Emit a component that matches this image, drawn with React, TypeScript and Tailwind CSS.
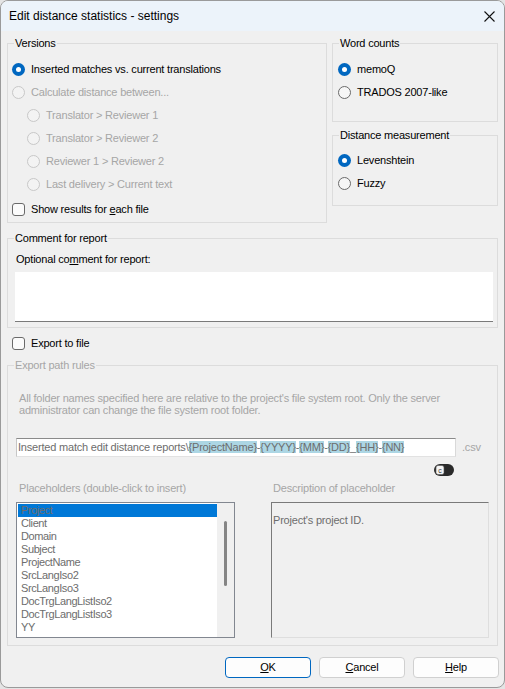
import React from "react";

const font = "font-['Liberation_Sans',Arial,sans-serif]";
const txt = "text-[11px] leading-[13px] tracking-[-0.2px]";

function Radio({ label, checked, disabled }: { label: string; checked?: boolean; disabled?: boolean }) {
  return (
    <div className="flex h-[23px] items-center gap-[6px]">
      {checked ? (
        <span className="flex h-[13px] w-[13px] items-center justify-center rounded-full bg-[#0067c0]">
          <span className="h-[5px] w-[5px] rounded-full bg-white" />
        </span>
      ) : (
        <span
          className={
            disabled
              ? "h-[13px] w-[13px] rounded-full border border-[#c8c8c8] bg-[#f3f3f3]"
              : "h-[13px] w-[13px] rounded-full border border-[#6a6a6a] bg-[#f6f6f6]"
          }
        />
      )}
      <span className={`${txt} ${disabled ? "text-[#a6a6a6]" : "text-black"}`}>{label}</span>
    </div>
  );
}

function Check({ children }: { children: React.ReactNode }) {
  return (
    <div className="flex h-[14px] items-center gap-[6px]">
      <span className="h-[13px] w-[13px] rounded-[3px] border border-[#6a6a6a] bg-[#fbfbfb]" />
      <span className={`${txt} text-black`}>{children}</span>
    </div>
  );
}

function Group({
  label,
  disabled,
  className,
  children,
}: {
  label: string;
  disabled?: boolean;
  className: string;
  children?: React.ReactNode;
}) {
  return (
    <div className={`relative border border-[#dcdcdc] ${className}`}>
      <span
        className={`absolute -top-[7px] left-[6px] bg-[#f0f0f0] px-[1px] ${txt} ${
          disabled ? "text-[#a6a6a6]" : "text-black"
        }`}
      >
        {label}
      </span>
      {children}
    </div>
  );
}

const placeholders = [
  "Project",
  "Client",
  "Domain",
  "Subject",
  "ProjectName",
  "SrcLangIso2",
  "SrcLangIso3",
  "DocTrgLangListIso2",
  "DocTrgLangListIso3",
  "YY",
];

function Hl({ children }: { children: React.ReactNode }) {
  return <span className="bg-[#acd6e4]">{children}</span>;
}

export default function App() {
  return (
    <div className={`h-[689px] w-[505px] bg-[#e4e4e4] ${font}`}>
      <div className="flex h-[688px] w-[505px] flex-col overflow-hidden rounded-[8px] border border-[#9a9a9a] bg-[#f0f0f0]">
        {/* title bar */}
        <div className="flex h-[30px] shrink-0 items-center justify-between bg-[#ecf3fa] pl-[8px] pr-[9px]">
          <span className="text-[12px] leading-[14px] text-black">Edit distance statistics - settings</span>
          <svg width="11" height="11" viewBox="0 0 11 11" className="mt-[1px]">
            <path d="M0.5 0.5 L10.5 10.5 M10.5 0.5 L0.5 10.5" stroke="#111" strokeWidth="1.1" />
          </svg>
        </div>

        <div className="flex flex-col pl-[6px] pt-[12px]">
          {/* top row */}
          <div className="flex gap-[5px]">
            <Group label="Versions" className="h-[180px] w-[320px]">
              <div className="pl-[4px] pt-[14px]">
                <Radio label="Inserted matches vs. current translations" checked />
                <Radio label="Calculate distance between..." disabled />
                <div className="pl-[15px]">
                  <Radio label="Translator > Reviewer 1" disabled />
                  <Radio label="Translator > Reviewer 2" disabled />
                  <Radio label="Reviewer 1 > Reviewer 2" disabled />
                  <Radio label="Last delivery > Current text" disabled />
                </div>
                <div className="mt-[6px]">
                  <Check>
                    Show results for <u className="underline-offset-1">e</u>ach file
                  </Check>
                </div>
              </div>
            </Group>
            <div className="flex w-[166px] flex-col gap-[13px]">
              <Group label="Word counts" className="h-[79px] w-[166px]">
                <div className="pl-[5px] pt-[14px]">
                  <Radio label="memoQ" checked />
                  <Radio label="TRADOS 2007-like" />
                </div>
              </Group>
              <Group label="Distance measurement" className="h-[71px] w-[166px]">
                <div className="pl-[5px] pt-[13px]">
                  <Radio label="Levenshtein" checked />
                  <Radio label="Fuzzy" />
                </div>
              </Group>
            </div>
          </div>

          {/* comment */}
          <Group label="Comment for report" className="mt-[15px] h-[90px] w-[491px]">
            <div className="pl-[8px] pt-[14px]">
              <div className={`${txt} h-[14px] text-black`}>
                Optional co<u className="underline-offset-1">m</u>ment for report:
              </div>
              <div className="mt-[5px] h-[50px] w-[478px] -translate-x-[1px] border-b border-[#7a7a7a] bg-white" />
            </div>
          </Group>

          <div className="mt-[8px] pl-[5px]">
            <Check>Export to file</Check>
          </div>

          {/* export path rules */}
          <Group label="Export path rules" disabled className="mt-[15px] h-[281px] w-[491px]">
            <div className={`pl-[11px] pt-[26px] text-[11px] leading-[12px] tracking-[-0.2px] text-[#a6a6a6]`}>
              All folder names specified here are relative to the project's file system root. Only the server
              <br />
              administrator can change the file system root folder.
            </div>
            <div className="mt-[22px] flex items-center pl-[8px]">
              <div className="flex h-[19px] w-[440px] items-center border border-t-[#8a8a8a] border-r-[#d9d9d9] border-b-[#e2e2e2] border-l-[#c6c6c6] bg-white pl-[1px]">
                <span className="whitespace-nowrap text-[11px] leading-[13px] tracking-[-0.2px] text-[#6d6d6d]">
                  Inserted match edit distance reports\<Hl>{"{ProjectName}"}</Hl>-<Hl>{"{YYYY}"}</Hl>-<Hl>{"{MM}"}</Hl>-
                  <Hl>{"{DD}"}</Hl>_<Hl>{"{HH}"}</Hl>-<Hl>{"{NN}"}</Hl>
                </span>
              </div>
              <span className={`${txt} ml-[6px] text-[#a6a6a6]`}>.csv</span>
            </div>
            <div className="mt-[7px] h-[12px] pl-[426px]">
              <svg width="20" height="12" viewBox="0 0 20 12">
                <rect x="0" y="0" width="20" height="12" rx="6" fill="#2a2a2a" />
                <rect x="2" y="1.5" width="8" height="9" rx="2" fill="#f4f4f4" stroke="#555" strokeWidth="0.6" />
                <text x="6" y="9" textAnchor="middle" fontSize="7" fontFamily="Liberation Sans, Arial, sans-serif" fill="#333">
                  c
                </text>
              </svg>
            </div>
            <div className={`${txt} mt-[5px] flex h-[14px] items-center text-[#a6a6a6]`}>
              <span className="w-[265px] pl-[11px]">Placeholders (double-click to insert)</span>
              <span>Description of placeholder</span>
            </div>
            <div className="mt-[7px] flex pl-[8px]">
              <div className="flex h-[136px] w-[219px] border border-[#828790] bg-white">
                <div className="flex-1 pl-[1px] pt-[1px]">
                  {placeholders.map((p, i) => (
                    <div
                      key={p}
                      className={`h-[13px] pl-[3px] text-[11px] leading-[13px] tracking-[-0.4px] text-[#6d6d6d] ${
                        i === 0 ? "bg-[#0078d7]" : ""
                      }`}
                    >
                      {p}
                    </div>
                  ))}
                </div>
                <div className="flex w-[17px] justify-center bg-[#f0f0f0] pt-[18px]">
                  <div className="h-[65px] w-[3px] rounded-full bg-[#858585]" />
                </div>
              </div>
              <div className="ml-[36px] h-[136px] w-[218px] border border-t-[#7a7a7a] border-l-[#7a7a7a] border-r-[#dedede] border-b-[#dedede] bg-[#f0f0f0] pl-[1px] pt-[4px]">
                <span className={`${txt} text-[#6d6d6d]`}>Project's project ID.</span>
              </div>
            </div>
          </Group>

          {/* buttons */}
          <div className="mt-[11px] flex justify-end gap-[8px] pr-[5px]">
            <button className={`h-[21px] w-[86px] rounded-[4px] border border-[#0067c0] bg-[#fdfdfd] ${txt} text-black`}>
              <u className="underline-offset-1">O</u>K
            </button>
            <button className={`h-[21px] w-[86px] rounded-[4px] border border-[#d0d0d0] bg-[#fdfdfd] ${txt} text-black`}>
              <u className="underline-offset-1">C</u>ancel
            </button>
            <button className={`h-[21px] w-[86px] rounded-[4px] border border-[#d0d0d0] bg-[#fdfdfd] ${txt} text-black`}>
              <u className="underline-offset-1">H</u>elp
            </button>
          </div>
        </div>
      </div>
    </div>
  );
}
